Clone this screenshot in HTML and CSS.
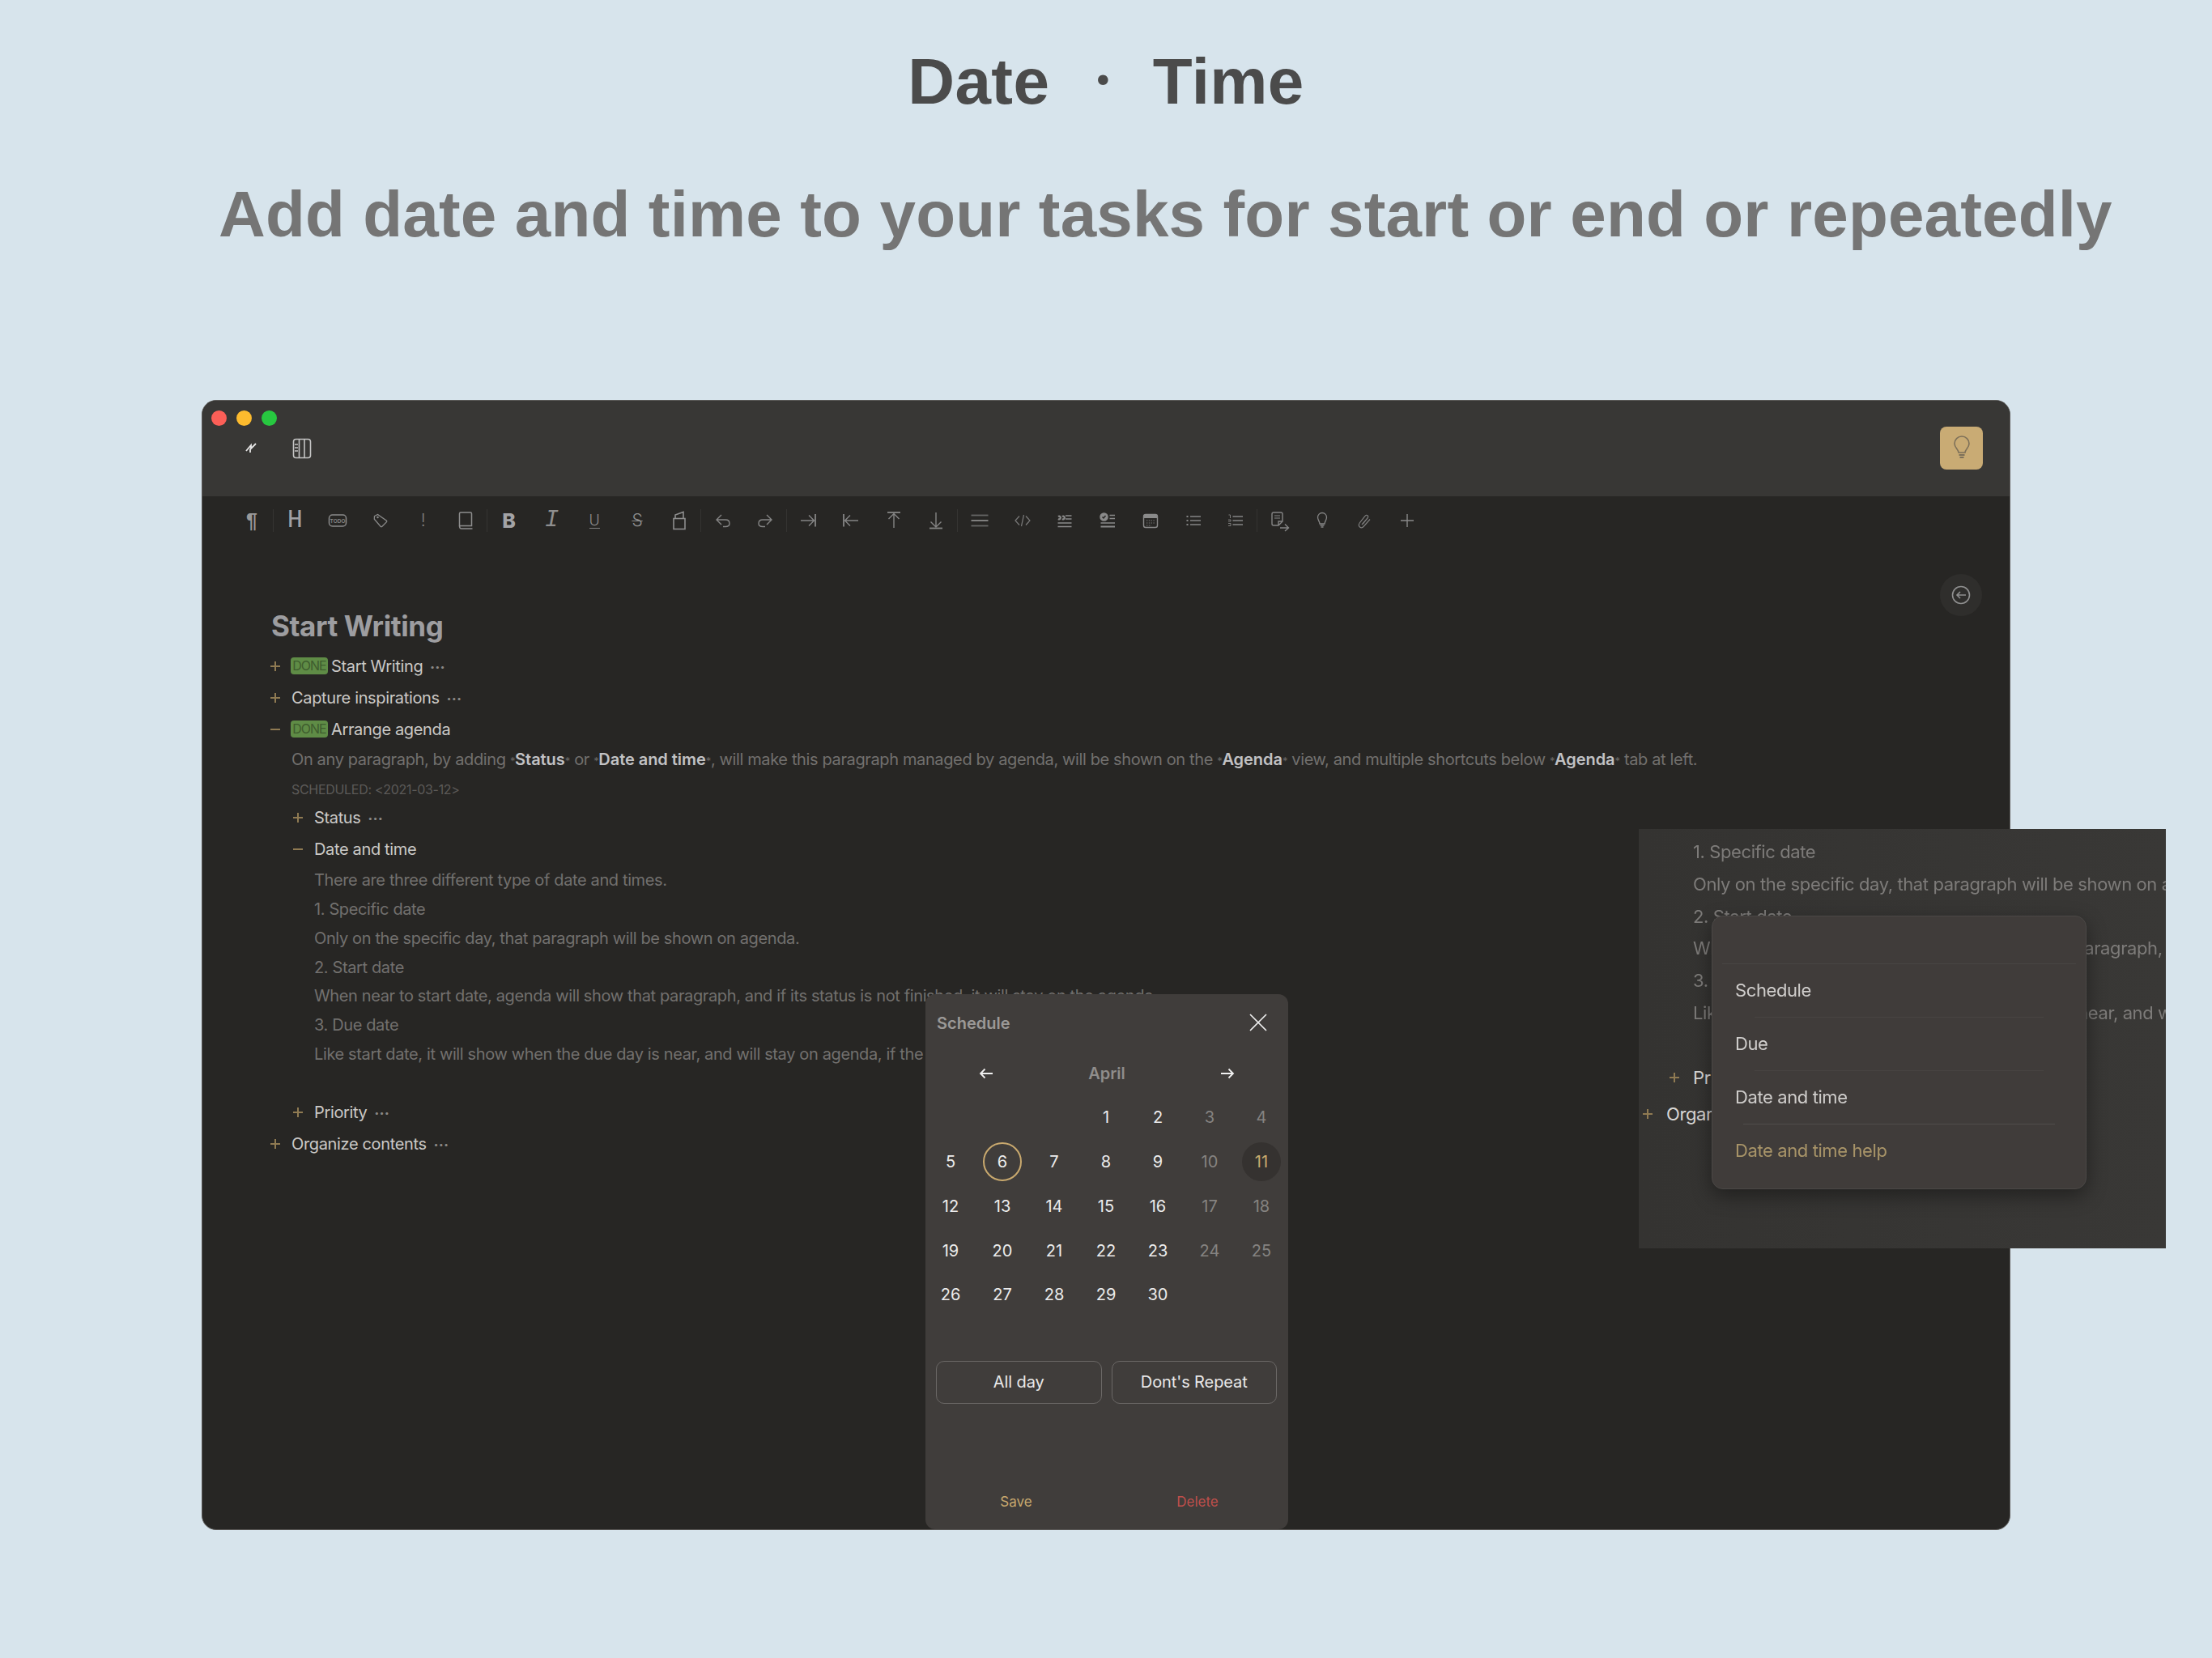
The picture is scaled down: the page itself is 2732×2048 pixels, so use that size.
FILE: index.html
```html
<!DOCTYPE html>
<html lang="en">
<head>
  <meta charset="UTF-8" />
  <title>Date · Time</title>
  <link rel="stylesheet" href="styles.css">
</head>
<body>

  <h1 class="page-title"><span>Date</span><span class="page-dot">·</span><span>Time</span></h1>
  <h2 class="page-sub">Add date and time to your tasks for start or end or repeatedly</h2>

  <div class="window">
    <div class="titlebar">
      <div class="titlebar-left">
        <div class="lights">
          <span class="light red"></span>
          <span class="light yellow"></span>
          <span class="light green"></span>
        </div>
        <div class="nav-icons">
          <svg class="nav-zig" width="20" height="20" viewBox="0 0 20 20" fill="none" stroke="#e8e8e8" stroke-width="1.8"><path d="M3 13 L9 6 L9 10 M8 15 L8 11 L15 4"/></svg>
          <svg class="nav-panel" width="24" height="26" viewBox="0 0 24 26" fill="none" stroke="#c4c4c4" stroke-width="1.6"><rect x="1.5" y="1.5" width="21" height="23" rx="3"/><path d="M8.5 2 V24 M15 2 V24 M3 8 H7 M3 12 H7 M3 16 H7"/></svg>
        </div>
      </div>
      <div class="tip-btn">
        <svg width="24" height="32" viewBox="0 0 24 32" fill="none" stroke="#7d7059" stroke-width="1.6"><path d="M8 21 C8 17 3 15 3 10 a9 9 0 0 1 18 0 C21 15 16 17 16 21 Z"/><path d="M8.5 24 H15.5 M9.5 27 H14.5" stroke-width="2"/></svg>
      </div>
    </div>

    <div class="toolbar">
      <span class="tool sep"><span class="gl gl-para">¶</span></span>
      <span class="tool"><span class="gl gl-h">H</span></span>
      <span class="tool"><svg width="28" height="28" viewBox="0 0 28 28" fill="none"><rect x="3.5" y="7" width="21" height="14" rx="4" stroke="#8a8a8a" stroke-width="1.5"/><text x="14" y="16.6" text-anchor="middle" class="todo-text">TODO</text></svg></span>
      <span class="tool"><svg width="28" height="28" viewBox="0 0 28 28" fill="none" stroke="#8a8a8a" stroke-width="1.3"><path d="M6.5 8.5 L10.5 6.5 L21.5 14.2 Q22 15 21.5 15.7 L15.7 21.5 Q15 22 14.2 21.5 L6.3 12.2 Z"/><circle cx="10.5" cy="10" r=".6"/></svg></span>
      <span class="tool"><span class="gl gl-bang">!</span></span>
      <span class="tool sep"><svg width="28" height="28" viewBox="0 0 28 28" fill="none" stroke="#8e8e8e" stroke-width="1.5"><path d="M6.5 20.5 V5.5 Q6.5 4 8 4 H20 Q21.5 4 21.5 5.5 V20.5 H6.5 Z"/><path d="M6.5 20.5 Q6.5 24 9 24 H22.5"/></svg></span>
      <span class="tool"><span class="gl gl-b">B</span></span>
      <span class="tool"><span class="gl gl-i">I</span></span>
      <span class="tool"><span class="gl gl-u">U</span></span>
      <span class="tool"><span class="gl gl-s">S</span></span>
      <span class="tool sep"><svg width="28" height="28" viewBox="0 0 28 28" fill="none" stroke="#8e8e8e" stroke-width="1.6"><rect x="7" y="11.5" width="14" height="13"/><path d="M9 11.5 V7 L19 3.5 V11.5"/></svg></span>
      <span class="tool"><svg width="28" height="28" viewBox="0 0 28 28" fill="none" stroke="#858585" stroke-width="1.4"><path d="M12 7 L6 13 L12 19 M6 13 H17 Q22 13 22 17.5 Q22 21.5 17 21.5 H14"/></svg></span>
      <span class="tool sep"><svg width="28" height="28" viewBox="0 0 28 28" fill="none" stroke="#858585" stroke-width="1.4"><path d="M16 7 L22 13 L16 19 M22 13 H11 Q6 13 6 17.5 Q6 21.5 11 21.5 H14"/></svg></span>
      <span class="tool"><svg width="28" height="28" viewBox="0 0 28 28" fill="none" stroke="#858585" stroke-width="1.4"><path d="M5 14 H21 M15 7.5 L21.5 14 L15 20.5"/><path d="M23 6 V21.5" stroke-width="1.8"/></svg></span>
      <span class="tool"><svg width="28" height="28" viewBox="0 0 28 28" fill="none" stroke="#858585" stroke-width="1.4"><path d="M23 14 H7 M13 7.5 L6.5 14 L13 20.5"/><path d="M5 6 V21.5" stroke-width="1.8"/></svg></span>
      <span class="tool"><svg width="28" height="28" viewBox="0 0 28 28" fill="none" stroke="#858585" stroke-width="1.4"><path d="M14 5 V23 M7.5 12 L14 5.5 L20.5 12"/><path d="M6 4 H22" stroke-width="1.8"/></svg></span>
      <span class="tool sep"><svg width="28" height="28" viewBox="0 0 28 28" fill="none" stroke="#858585" stroke-width="1.4"><path d="M14 4 V22 M7.5 15.5 L14 22 L20.5 15.5"/><path d="M6 23.5 H22" stroke-width="1.8"/></svg></span>
      <span class="tool"><svg width="28" height="28" viewBox="0 0 28 28" fill="none" stroke-width="1.8"><path d="M3.5 7.5 H24.5" stroke="#666"/><path d="M3.5 14 H24.5" stroke="#8a8a8a"/><path d="M3.5 20.5 H24.5" stroke="#666"/></svg></span>
      <span class="tool"><svg width="28" height="28" viewBox="0 0 28 28" fill="none" stroke="#7a7a7a" stroke-width="1.2"><path d="M10 8.5 L5 14 L10 19.5 M18 8.5 L23 14 L18 19.5 M15.5 7 L12.5 21"/></svg></span>
      <span class="tool"><svg width="28" height="28" viewBox="0 0 28 28" fill="none" stroke="#8a8a8a" stroke-width="1.5"><path d="M15 8 H22.5 M15 12 H22.5 M5.5 17 H22.5 M5.5 21.5 H22.5"/><path d="M6 9 a1.8 1.8 0 1 1 0 3 M11 9 a1.8 1.8 0 1 1 0 3" stroke-width="2.2"/></svg></span>
      <span class="tool"><svg width="28" height="28" viewBox="0 0 28 28" fill="none" stroke="#8a8a8a" stroke-width="1.5"><circle cx="9.5" cy="9.5" r="4.5" fill="#8a8a8a"/><path d="M7.5 9.5 L9 11 L11.5 8" stroke="#272624"/><path d="M16.5 7.5 H23 M16.5 11.5 H23 M5.5 17 H23"/><path d="M5.5 21.5 H23" stroke-width="2"/></svg></span>
      <span class="tool"><svg width="28" height="28" viewBox="0 0 28 28" fill="none"><rect x="5.5" y="6.5" width="17" height="16" rx="2.5" stroke="#8a8a8a" stroke-width="1.4"/><path d="M5.5 9 Q5.5 6.5 8 6.5 H20 Q22.5 6.5 22.5 9 V11 H5.5 Z" fill="#8a8a8a"/><path d="M9 14 H19 M9 17 H19 M9 20 H15" stroke="#7a7a7a" stroke-width="1.2" stroke-dasharray="1.4 1.4"/></svg></span>
      <span class="tool"><svg width="28" height="28" viewBox="0 0 28 28" fill="none" stroke="#858585" stroke-width="1.4"><path d="M10 9 H23 M10 14 H23 M10 19 H23"/><path d="M5.5 9 H7.5 M5.5 14 H7.5 M5.5 19 H7.5" stroke-width="2"/></svg></span>
      <span class="tool sep"><svg width="28" height="28" viewBox="0 0 28 28" fill="none" stroke="#858585" stroke-width="1.5"><path d="M10.5 9 H23 M10.5 14 H23 M10.5 19 H23"/><path d="M5.5 7 H7.5 V11 M5 13 H8 V15 H5 M5 17.5 H8 V20.5 H5" stroke-width=".9"/></svg></span>
      <span class="tool"><svg width="28" height="28" viewBox="0 0 28 28" fill="none" stroke="#858585" stroke-width="1.4"><path d="M5 6 Q5 4 7 4 H16 Q18 4 18 6 V15 L13 20 H7 Q5 20 5 18 Z M13 20 V15 H18"/><path d="M8 8 H15 M8 11 H15" stroke-width="1.2"/><path d="M15 23 H25 M21 18.5 L25.5 23 L21 27"/></svg></span>
      <span class="tool"><svg width="28" height="28" viewBox="0 0 28 28" fill="none" stroke="#858585" stroke-width="1.3"><path d="M11 18 C11 15 8.5 13.5 8.5 10 a5.5 5.5 0 0 1 11 0 C19.5 13.5 17 15 17 18 Z"/><path d="M11.5 20 H16.5 M12.5 22 H15.5" stroke-width="1.5"/></svg></span>
      <span class="tool"><svg width="28" height="28" viewBox="0 0 28 28" fill="none" stroke="#7d7d7d" stroke-width="1.2"><path d="M11 19 L18 11 Q19.5 9 18 7.7 Q16.5 6.5 15 8.5 L8.5 16.5 Q6 20 8.5 22 Q11 24 13.5 21 L21 12.5 M12.5 18 L16.5 13"/></svg></span>
      <span class="tool"><svg width="28" height="28" viewBox="0 0 28 28" fill="none" stroke="#8a8a8a" stroke-width="1.4"><path d="M14 6 V22 M6 14 H22"/></svg></span>
    </div>

    <div class="doc">
      <div class="doc-title">Start Writing</div>

      <div class="row"><span class="tog plus"></span><span class="done">DONE</span>Start Writing<span class="more">•••</span></div>
      <div class="row"><span class="tog plus"></span>Capture inspirations<span class="more">•••</span></div>
      <div class="row"><span class="tog minus"></span><span class="done">DONE</span>Arrange agenda</div>

      <div class="nest-top">
        <p class="para">On any paragraph, by adding <i>*</i><b>Status</b><i>*</i> or <i>*</i><b>Date and time</b><i>*</i>, will make this paragraph managed by agenda, will be shown on the <i>*</i><b>Agenda</b><i>*</i> view, and multiple shortcuts below <i>*</i><b>Agenda</b><i>*</i> tab at left.</p>
        <p class="scheduled">SCHEDULED: &lt;2021-03-12&gt;</p>
      </div>

      <div class="nest">
        <div class="row"><span class="tog plus"></span>Status<span class="more">•••</span></div>
        <div class="row"><span class="tog minus"></span>Date and time</div>
        <div class="nest-top tight">
          <p class="para">There are three different type of date and times.</p>
          <p class="para">1. Specific date</p>
          <p class="para">Only on the specific day, that paragraph will be shown on agenda.</p>
          <p class="para">2. Start date</p>
          <p class="para">When near to start date, agenda will show that paragraph, and if its status is not finished, it will stay on the agenda.</p>
          <p class="para">3. Due date</p>
          <p class="para">Like start date, it will show when the due day is near, and will stay on agenda, if the status is not finished.</p>
          <p class="para blank"></p>
        </div>
        <div class="row"><span class="tog plus"></span>Priority<span class="more">•••</span></div>
      </div>
      <div class="row"><span class="tog plus"></span>Organize contents<span class="more">•••</span></div>
    </div>

    <div class="back-btn">
      <svg width="24" height="24" viewBox="0 0 24 24" fill="none" stroke="#8f8f8f" stroke-width="1.6"><circle cx="12" cy="12" r="10.5"/><path d="M18 12 H7 M11 8 L7 12 L11 16"/></svg>
    </div>

    <div class="schedule">
      <div class="schedule-head">
        <span class="schedule-title">Schedule</span>
        <svg width="22" height="22" viewBox="0 0 22 22" fill="none" stroke="#f0f0f0" stroke-width="1.6"><path d="M1 1 L21 21 M21 1 L1 21"/></svg>
      </div>
      <div class="month-nav">
        <svg width="18" height="14" viewBox="0 0 18 14" fill="none" stroke="#f0f0f0" stroke-width="1.8"><path d="M17 7 H2 M7.5 1.5 L2 7 L7.5 12.5"/></svg>
        <span>April</span>
        <svg width="18" height="14" viewBox="0 0 18 14" fill="none" stroke="#f0f0f0" stroke-width="1.8"><path d="M1 7 H16 M10.5 1.5 L16 7 L10.5 12.5"/></svg>
      </div>
      <div class="days">
        <span></span><span></span><span></span><span>1</span><span>2</span><span class="off">3</span><span class="off">4</span>
        <span>5</span><span><em class="today">6</em></span><span>7</span><span>8</span><span>9</span><span class="off">10</span><span><em class="picked">11</em></span>
        <span>12</span><span>13</span><span>14</span><span>15</span><span>16</span><span class="off">17</span><span class="off">18</span>
        <span>19</span><span>20</span><span>21</span><span>22</span><span>23</span><span class="off">24</span><span class="off">25</span>
        <span>26</span><span>27</span><span>28</span><span>29</span><span>30</span><span></span><span></span>
      </div>
      <div class="schedule-btns">
        <button class="ghost-btn">All day</button>
        <button class="ghost-btn">Dont's Repeat</button>
      </div>
      <div class="schedule-foot">
        <span class="save">Save</span>
        <span class="delete">Delete</span>
      </div>
    </div>
  </div>

  <div class="side">
    <div class="side-text">
      <p>1. Specific date</p>
      <p>Only on the specific day, that paragraph will be shown on agenda.</p>
      <p>2. Start date</p>
      <p>When near to start date, agenda will show that paragraph, and if its status is not finished.</p>
      <p>3. Due date</p>
      <p>Like start date, it will show when the due day is near, and will stay on agenda.</p>
    </div>
    <div class="side-row first"><span class="tog plus"></span>Priority</div>
    <div class="side-row second"><span class="tog plus"></span>Organize contents</div>

    <div class="menu">
      <div class="menu-top"></div>
      <div class="menu-item">Schedule</div>
      <hr class="menu-line">
      <div class="menu-item">Due</div>
      <hr class="menu-line">
      <div class="menu-item">Date and time</div>
      <hr class="menu-line strong">
      <div class="menu-item help">Date and time help</div>
    </div>
  </div>

</body>
</html>
```

FILE: styles.css
```css
* {
  box-sizing: border-box;
  margin: 0;
  padding: 0;
}

body {
  position: relative;
  width: 2732px;
  height: 2048px;
  overflow: hidden;
  background-color: #d7e4ec;
  font-family: Inter, sans-serif;
}

.page-title,
.page-sub {
  font-family: "Liberation Sans", Arial, sans-serif;
  font-weight: bold;
  font-size: 80px;
  line-height: 80px;
  white-space: nowrap;
}

.page-title {
  display: flex;
  justify-content: center;
  margin-top: 61px;
  letter-spacing: 0.4px;
  color: #4b4b4b;
}

.page-dot {
  margin: -7px 52px 0 57px;
  font-family: Lato, sans-serif;
  font-size: 66px;
}

.page-sub {
  margin-top: 84px;
  margin-left: 270px;
  letter-spacing: 0.15px;
  color: #757575;
}

/* app window */
.window {
  position: relative;
  width: 2234px;
  height: 1396px;
  margin: 189px 0 0 249px;
  background-color: #272624;
  border: 1px solid #5d5b59;
  border-radius: 18px;
  overflow: hidden;
}

.titlebar {
  display: flex;
  justify-content: space-between;
  height: 118px;
  background-color: #383735;
}

.titlebar-left {
  padding: 12px 0 0 11px;
}

.lights {
  display: flex;
  gap: 12px;
}

.light {
  width: 19px;
  height: 19px;
  border-radius: 50%;
}

.light.red { background-color: #fc5f57; }
.light.yellow { background-color: #fdbb2e; }
.light.green { background-color: #27c840; }

.nav-icons {
  display: flex;
  align-items: center;
  margin-top: 15px;
  padding-left: 40px;
}

.nav-panel {
  margin-left: 40px;
}

.tip-btn {
  display: flex;
  align-items: center;
  justify-content: center;
  width: 53px;
  height: 53px;
  margin: 32px 33px 0 0;
  background-color: #c9ab74;
  border-radius: 8px;
}

/* toolbar */
.toolbar {
  display: flex;
  align-items: center;
  height: 60px;
  padding-left: 35px;
}

.tool {
  display: flex;
  align-items: center;
  justify-content: center;
  flex: none;
  width: 52.85px;
  height: 28px;
  color: #8e8e8e;
}

.tool.sep {
  border-right: 1px solid #353432;
}

.todo-text {
  font-family: Inter, sans-serif;
  font-size: 6.5px;
  font-weight: 600;
  fill: #8a8a8a;
}

.gl {
  line-height: 28px;
}

.gl-para { font-size: 25px; font-weight: bold; color: #999; font-family: "Liberation Sans", sans-serif; }
.gl-h { font-size: 32px; color: #a0a0a3; font-family: "Liberation Mono", monospace; }
.gl-bang { font-size: 21px; font-weight: 300; color: #7f7f7f; }
.gl-b { font-size: 25px; font-weight: 800; color: #a3a3a6; }
.gl-i { font-size: 29px; font-style: italic; color: #8f8f8f; font-family: "Liberation Mono", monospace; }
.gl-u { font-size: 18px; font-weight: 300; line-height: 18px; border-bottom: 1.5px solid #808080; }
.gl-s { font-size: 21px; font-weight: 300; text-decoration: line-through; text-decoration-thickness: 1px; }

/* document */
.doc {
  padding: 78px 0 0 85px;
  font-size: 20px;
  color: #cbc9c6;
  white-space: nowrap;
}

.doc-title {
  margin-bottom: 8px;
  font-size: 35px;
  line-height: 44px;
  font-weight: 700;
  letter-spacing: -0.4px;
  color: #9d9da0;
}

.row {
  display: flex;
  align-items: center;
  height: 39px;
  letter-spacing: -0.35px;
}

.tog {
  position: relative;
  flex: none;
  width: 25px;
  height: 12px;
}

.tog::before,
.tog.plus::after {
  content: "";
  position: absolute;
  background-color: #8f7a52;
}

.tog::before {
  left: -1px;
  top: 5px;
  width: 12px;
  height: 2px;
}

.tog.plus::after {
  left: 4px;
  top: 0;
  width: 2px;
  height: 12px;
}

.done {
  width: 46px;
  height: 21px;
  margin: 0 4px 0 -1px;
  background-color: #5f8c46;
  border-radius: 4px;
  font-size: 16px;
  line-height: 21px;
  text-align: center;
  letter-spacing: -1px;
  color: #3e5c2e;
}

.more {
  margin-left: 9px;
  font-size: 10px;
  letter-spacing: 0.6px;
  color: #8a8886;
}

.nest-top {
  padding-left: 25px;
}

.nest-top.tight {
  margin-top: 1px;
}

.nest {
  padding-left: 28px;
}

.para {
  height: 35.8px;
  font-size: 20px;
  line-height: 36px;
  letter-spacing: -0.37px;
  color: #72706e;
}

.para.blank {
  height: 34.5px;
}

.para b {
  font-weight: 600;
  letter-spacing: -0.05px;
  color: #c2c2c4;
}

.para i {
  font-style: normal;
  font-size: 13px;
  color: #6a6866;
}

.scheduled {
  height: 34.5px;
  padding-top: 5px;
  font-size: 16px;
  line-height: 28px;
  letter-spacing: -0.3px;
  color: #5c5a58;
}

.back-btn {
  position: absolute;
  right: 34px;
  top: 214px;
  display: flex;
  align-items: center;
  justify-content: center;
  width: 52px;
  height: 52px;
  background-color: #2f2e2c;
  border-radius: 50%;
}

/* schedule popup */
.schedule {
  position: absolute;
  left: 893px;
  top: 733px;
  width: 448px;
  height: 661px;
  background-color: #403d3b;
  border-radius: 12px;
  color: #ececec;
  font-size: 20px;
}

.schedule-head {
  display: flex;
  align-items: center;
  justify-content: space-between;
  height: 70px;
  padding: 0 26px 0 14px;
  font-weight: 600;
  color: #9b9997;
}

.schedule-title {
  padding-top: 2px;
}

.month-nav {
  display: flex;
  align-items: center;
  justify-content: space-between;
  height: 55px;
  padding: 0 66px;
  font-weight: 600;
  color: #8f8d8b;
}

.days {
  display: grid;
  grid-template-columns: repeat(7, 64px);
  grid-auto-rows: 54.75px;
  margin-left: -1px;
}

.days span {
  display: flex;
  align-items: center;
  justify-content: center;
}

.days .off {
  color: #858381;
}

.days em {
  display: flex;
  align-items: center;
  justify-content: center;
  width: 48px;
  height: 48px;
  border-radius: 50%;
  font-style: normal;
}

.today {
  border: 2px solid #c9a96e;
}

.picked {
  background-color: #353230;
  color: #c9ab6e;
}

.schedule-btns {
  display: flex;
  gap: 12px;
  margin-top: 54px;
  padding-left: 13px;
}

.ghost-btn {
  width: 204.5px;
  height: 53px;
  background: none;
  border: 1px solid #6b6866;
  border-radius: 10px;
  font-family: Inter, sans-serif;
  font-size: 20px;
  letter-spacing: -0.1px;
  color: #e8e8e8;
}

.schedule-foot {
  display: grid;
  grid-template-columns: 1fr 1fr;
  margin-top: 101px;
  font-size: 17px;
  line-height: 40px;
  text-align: center;
}

.save { color: #c9a96e; }
.delete { color: #bf4f4b; }

/* zoomed side panel */
.side {
  position: absolute;
  left: 2024px;
  top: 1024px;
  width: 651px;
  height: 518px;
  background: linear-gradient(90deg, #343331, #393836);
  overflow: hidden;
  white-space: nowrap;
  font-size: 22px;
  letter-spacing: -0.4px;
}

.side-text {
  padding: 9px 0 0 67px;
  filter: blur(0.7px);
  color: #7d7b79;
}

.side-text p {
  height: 39.8px;
  line-height: 39px;
}

.side-row {
  display: flex;
  align-items: center;
  height: 39px;
  color: #d8d6d4;
}

.side-row.first {
  margin-top: 39.7px;
  padding-left: 39px;
}

.side-row.second {
  margin-top: 6px;
  padding-left: 6px;
}

.side-row .tog {
  width: 28px;
}

.menu {
  position: absolute;
  left: 90px;
  top: 107px;
  width: 463px;
  height: 338px;
  background-color: #403c3a;
  border: 1px solid #4b4846;
  border-radius: 14px;
  box-shadow: 0 8px 24px rgba(0, 0, 0, 0.4);
}

.menu-top {
  height: 58.7px;
  margin: 0 12px;
  border-bottom: 1px solid #484543;
}

.menu-item {
  height: 65px;
  padding-left: 28px;
  line-height: 65px;
  color: #cfcdcb;
  filter: blur(0.7px);
}

.menu-item.help {
  color: #a89468;
}

.menu-line {
  height: 1px;
  margin: 0 52px;
  border: none;
  background-color: #474442;
}

.menu-line.strong {
  margin: 0 38px;
  background-color: #504d4b;
}
```
